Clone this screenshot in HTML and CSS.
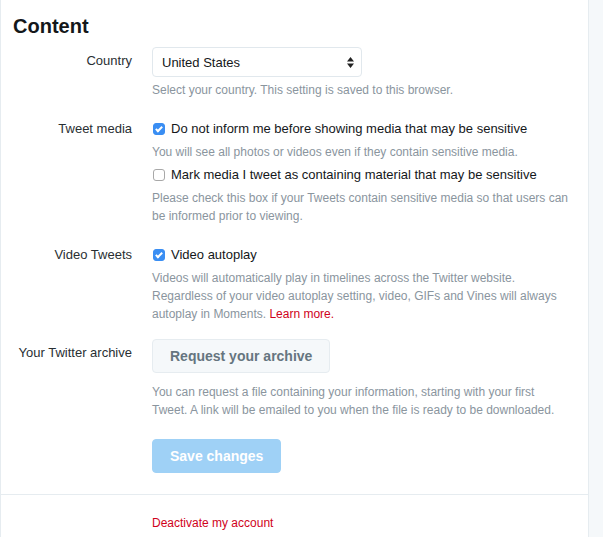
FILE: index.html
```html
<!DOCTYPE html>
<html>
<head>
    <meta charset="UTF-8">
    <link rel="stylesheet" href="styles.css">
</head>
<body>
    <div class="page">
        <div class="panel">
            <h2 class="title">Content</h2>

            <div class="row">
                <label class="label pad">Country</label>
                <div class="field">
                    <div class="select-wrap">
                        <select class="select">
                            <option>United States</option>
                        </select>
                        <svg class="arrows" width="7" height="11" viewBox="0 0 7 11">
                            <path d="M3.5 0 L7 4.5 L0 4.5 Z M3.5 11 L7 6.5 L0 6.5 Z" fill="#222"/>
                        </svg>
                    </div>
                    <p class="help">Select your country. This setting is saved to this browser.</p>
                </div>
            </div>

            <div class="row">
                <label class="label">Tweet media</label>
                <div class="field">
                    <label class="check"><input type="checkbox" checked> Do not inform me before showing media that may be sensitive</label>
                    <p class="help">You will see all photos or videos even if they contain sensitive media.</p>
                    <label class="check"><input type="checkbox"> Mark media I tweet as containing material that may be sensitive</label>
                    <p class="help">Please check this box if your Tweets contain sensitive media so that users can be informed prior to viewing.</p>
                </div>
            </div>

            <div class="row">
                <label class="label">Video Tweets</label>
                <div class="field">
                    <label class="check"><input type="checkbox" checked> Video autoplay</label>
                    <p class="help">Videos will automatically play in timelines across the Twitter website. Regardless of your video autoplay setting, video, GIFs and Vines will always autoplay in Moments. <a class="help-link" href="#">Learn more.</a></p>
                </div>
            </div>

            <div class="row archive">
                <label class="label pad">Your Twitter archive</label>
                <div class="field">
                    <button class="btn">Request your archive</button>
                    <p class="help wide">You can request a file containing your information, starting with your first Tweet. A link will be emailed to you when the file is ready to be downloaded.</p>
                </div>
            </div>

            <div class="row actions">
                <div></div>
                <div class="field">
                    <button class="btn primary" disabled>Save changes</button>
                </div>
            </div>

            <hr class="divider">

            <div class="row footer">
                <div></div>
                <div class="field">
                    <a class="link" href="#">Deactivate my account</a>
                </div>
            </div>
        </div>
    </div>
</body>
</html>
```

FILE: styles.css
```css
body {
    margin: 0;
    background: #f5f8fa;
    font-family: "Liberation Sans", Arial, sans-serif;
    color: #14171a;
}

.page {
    display: flex;
    min-height: 537px;
}

.panel {
    width: 587px;
    background: #fff;
    border-left: 1px solid #e6ecf0;
    border-right: 1px solid #e6ecf0;
}

.title {
    margin: 0;
    padding: 14px 0 0 12px;
    font-size: 20px;
    line-height: 24px;
    font-weight: bold;
    color: #14171a;
}

.row {
    display: grid;
    grid-template-columns: 131px 418px;
    column-gap: 20px;
    margin-top: 20px;
}

.title + .row {
    margin-top: 9px;
}

.row.archive {
    margin-top: 16px;
}

.label {
    text-align: right;
    font-size: 13px;
    line-height: 20px;
    color: #292f33;
}

.label.pad {
    padding-top: 4px;
}

.field {
    display: flex;
    flex-direction: column;
    align-items: flex-start;
}

.select-wrap {
    position: relative;
    width: 210px;
}

.select {
    appearance: none;
    -webkit-appearance: none;
    width: 210px;
    height: 30px;
    margin: 0;
    padding: 0 9px;
    border: 1px solid #e1e8ed;
    border-radius: 4px;
    background: #fff;
    font-family: inherit;
    font-size: 13px;
    color: #14171a;
}

.arrows {
    position: absolute;
    right: 8px;
    top: 10px;
}

.help {
    margin: 4px 0 0;
    font-size: 12px;
    line-height: 18px;
    color: #8a959e;
}

.help.wide {
    margin-top: 10px;
}

.help-link {
    color: #d0021b;
    text-decoration: none;
}

.check {
    display: flex;
    align-items: center;
    gap: 6px;
    margin-top: 4px;
    font-size: 13px;
    line-height: 20px;
    color: #14171a;
}

.field > .check:first-child {
    margin-top: 0;
}

.check input {
    appearance: none;
    -webkit-appearance: none;
    width: 12px;
    height: 12px;
    margin: 0 0 0 1px;
    border: 1px solid #a8a8a8;
    border-radius: 3px;
    background: #fff;
}

.check input:checked {
    background: #3a8ef3;
    border-color: #3a8ef3;
}

.check input:checked::after {
    content: "";
    display: block;
    width: 2px;
    height: 5px;
    margin: 1px auto 0;
    border: solid #fff;
    border-width: 0 2px 2px 0;
    transform: rotate(45deg);
}

.btn {
    height: 34px;
    padding: 0 17px;
    border: 1px solid #e6ecf0;
    border-radius: 4px;
    background: #f5f8fa;
    font-family: inherit;
    font-size: 14px;
    font-weight: bold;
    color: #66757f;
}

.btn.primary {
    border-color: #9fd1f6;
    background: #9fd1f6;
    color: #fff;
}

.row.actions {
    margin-top: 20px;
}

.divider {
    margin: 21px 0 0;
    border: 0;
    border-top: 1px solid #e6ecf0;
}

.row.footer {
    margin-top: 19px;
}

.link {
    color: #d0021b;
    text-decoration: none;
    font-size: 12px;
    line-height: 18px;
}
```
